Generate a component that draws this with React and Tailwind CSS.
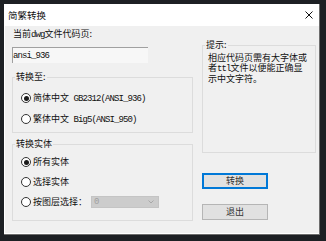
import React from "react";

// latin runs render half-width, like SimSun
const M = ({ children }) => (
  <span className="font-['Liberation_Mono',monospace] tracking-[-0.9px]">{children}</span>
);

const Radio = ({ checked }) => (
  <span className="flex h-[10px] w-[10px] shrink-0 items-center justify-center rounded-full border border-[#333333] bg-white">
    {checked && <span className="h-[5px] w-[5px] rounded-full bg-[#1a1a1a]" />}
  </span>
);

const RadioRow = ({ checked, children }) => (
  <div className="flex h-[12px] items-center gap-[2px]">
    <Radio checked={checked} />
    <span className="whitespace-nowrap">{children}</span>
  </div>
);

const Group = ({ title, className, children }) => (
  <fieldset className={`border border-[#dcdcdc] ${className}`}>
    <legend className="ml-[2px] px-[1px] leading-[10px]">{title}</legend>
    {children}
  </fieldset>
);

export default function App() {
  return (
    <div className="h-[241px] w-[326px] bg-[#1d2024] pl-[4px] pt-[4px] font-['Noto_Sans_CJK_SC',sans-serif] text-[9px] leading-[10px] text-[#111]">
      <div className="flex h-[231px] w-[316px] flex-col border-r border-b border-[#6d6d6d]">
        {/* Title bar */}
        <div className="flex h-[22px] shrink-0 items-center justify-between bg-white pl-[4px] pr-[6px]">
          <span className="text-[9.5px]">简繁转换</span>
          <svg width="8" height="8" viewBox="0 0 8 8">
            <path d="M0.5 0.5L7.5 7.5M7.5 0.5L0.5 7.5" stroke="#111" strokeWidth="1" />
          </svg>
        </div>

        {/* Body */}
        <div className="flex flex-1 gap-[9px] border-l border-b border-white bg-[#f0f0f0] pl-[7px] pr-[3px]">
          {/* Left column */}
          <div className="flex w-[181px] flex-col">
            <p className="ml-[1px] mt-[3px]">
              当前<M>dwg</M>文件代码页:
            </p>
            <div className="mt-[7px] flex h-[16px] w-[136px] items-center border-t border-l border-[#a0a0a0] bg-[#f7f7f7]">
              <M>ansi_936</M>
            </div>

            <Group title="转换至:" className="mt-[9px] pb-[7px]">
              <div className="mt-[10px] flex flex-col gap-[9px] pl-[8px]">
                <RadioRow checked>
                  简体中文<M> GB2312(ANSI_936)</M>
                </RadioRow>
                <RadioRow>
                  繁体中文<M> Big5(ANSI_950)</M>
                </RadioRow>
              </div>
            </Group>

            <Group title="转换实体" className="mt-[6px] pb-[12px]">
              <div className="mt-[7px] flex flex-col gap-[8px] pl-[8px]">
                <RadioRow checked>所有实体</RadioRow>
                <RadioRow>选择实体</RadioRow>
                <div className="flex h-[12px] items-center gap-[2px]">
                  <Radio />
                  <span className="whitespace-nowrap">按图层选择：</span>
                  <div className="ml-[2px] flex h-[12px] w-[68px] items-center justify-between border border-[#c4c4c4] bg-[#cccccc] pl-[2px] pr-[4px] text-[#a0a0a0]">
                    <M>0</M>
                    <svg width="6" height="4" viewBox="0 0 6 4">
                      <path d="M0.5 0.5L3 3L5.5 0.5" fill="none" stroke="#a8a8a8" strokeWidth="1" />
                    </svg>
                  </div>
                </div>
              </div>
            </Group>
          </div>

          {/* Right column */}
          <div className="flex w-[114px] flex-col">
            <Group title="提示:" className="mt-[14px] h-[113px]">
              <p className="mt-[3px] pl-[5px] leading-[9.5px]">
                相应代码页需有大字体或
                <br />
                者<M>ttl</M>文件以便能正确显
                <br />
                示中文字符。
              </p>
            </Group>

            <button className="mt-[20px] flex h-[16px] w-[66px] items-center justify-center border-2 border-[#0078d7] bg-[#e1e1e1] text-[#333]">
              转换
            </button>
            <button className="mt-[15px] flex h-[16px] w-[66px] items-center justify-center border border-[#b5b5b5] bg-[#e1e1e1] text-[#333]">
              退出
            </button>
          </div>
        </div>
      </div>
    </div>
  );
}
